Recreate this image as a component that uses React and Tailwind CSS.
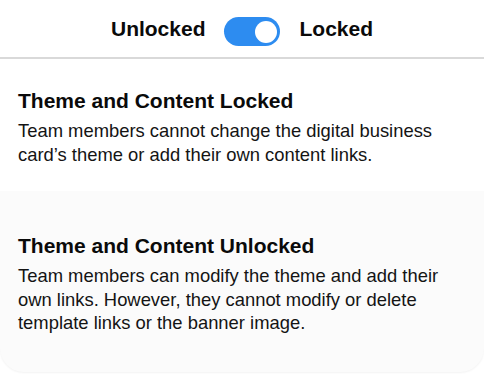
import React, { useState } from "react";

const Section = ({ title, children, className }) => (
  <div className={className}>
    <h2 className="text-[21px] leading-[26px] font-bold text-[#0a0a0a]">{title}</h2>
    <p className="mt-[5px] text-[18.4px] leading-[23.7px] text-[#141414]">{children}</p>
  </div>
);

const App = () => {
  const [locked, setLocked] = useState(true);

  return (
    <div className="w-[484px] h-[374px] bg-white overflow-hidden" style={{ fontFamily: '"Liberation Sans", Arial, sans-serif' }}>
      {/* lock switch */}
      <div className="h-[59px] flex items-center justify-center border-b-2 border-[#d9d9d9]">
        <span className="text-[21px] leading-[26px] font-bold text-[#0a0a0a]">Unlocked</span>
        <button
          className={
            locked
              ? "mt-[6px] ml-[18px] mr-[20px] w-[56px] h-[29px] rounded-full bg-[#2d8cf0] flex items-center justify-end px-[3px]"
              : "mt-[6px] ml-[18px] mr-[20px] w-[56px] h-[29px] rounded-full bg-[#d4d4d4] flex items-center justify-start px-[3px]"
          }
          onClick={() => setLocked((prev) => !prev)}
        >
          <span className="w-[22px] h-[22px] rounded-full bg-white block" />
        </button>
        <span className="text-[21px] leading-[26px] font-bold text-[#0a0a0a]">Locked</span>
      </div>

      <Section title="Theme and Content Locked" className="h-[132px] px-[18px] pt-[29px]">
        Team members cannot change the digital business card’s theme or add their own content links.
      </Section>

      <Section
        title="Theme and Content Unlocked"
        className="h-[181px] px-[18px] pt-[42px] bg-[#fbfbfb] rounded-b-[24px] shadow-[0_1px_2px_rgba(0,0,0,0.05)]"
      >
        Team members can modify the theme and add their own links. However, they cannot modify or delete template links or the banner image.
      </Section>
    </div>
  );
};

export default App;
